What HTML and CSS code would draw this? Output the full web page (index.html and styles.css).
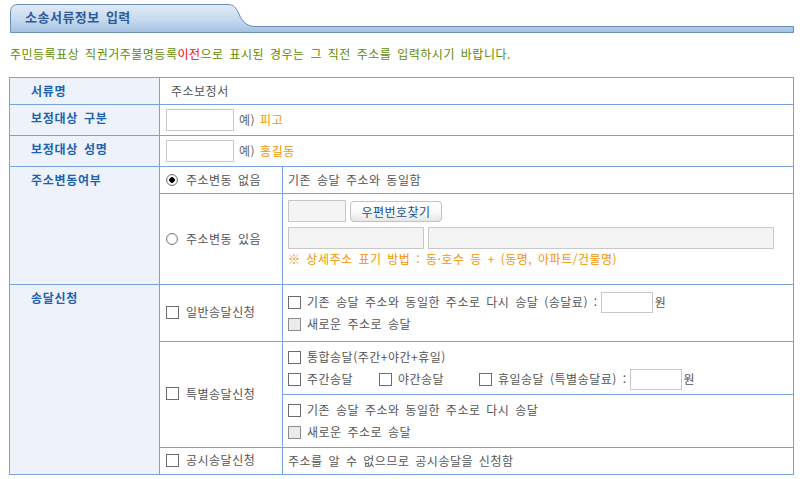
FILE: index.html
```html
<!DOCTYPE html>
<html lang="ko">
<head>
    <meta charset="UTF-8">
    <title>소송서류정보 입력</title>
    <link rel="stylesheet" href="styles.css">
</head>
<body>
    <div class="page">

        <div class="title">
            <svg class="title-bg" viewBox="0 0 784 29" preserveAspectRatio="none">
                <defs>
                    <linearGradient id="tabFill" x1="0" y1="0" x2="0" y2="1">
                        <stop offset="0" stop-color="#e1ebf6"/>
                        <stop offset="0.55" stop-color="#c6d9ee"/>
                        <stop offset="1" stop-color="#a3c0e0"/>
                    </linearGradient>
                </defs>
                <path d="M0.5,28.5 L0.5,8 Q0.5,0.5 8,0.5 L218,0.5 C224,0.5 226,4 229,10 C232,17 236,22.5 246,22.5 L783.5,22.5 L783.5,28.5 Z"
                      fill="url(#tabFill)" stroke="#6a8fbd" stroke-width="1"/>
            </svg>
            <span class="title-text">소송서류정보 입력</span>
        </div>

        <p class="notice">주민등록표상 직권거주불명등록<em>이전</em>으로 표시된 경우는 그 직전 주소를 입력하시기 바랍니다.</p>

        <table class="form-table">
            <colgroup>
                <col class="c-label">
                <col class="c-opt">
                <col>
            </colgroup>
            <tr class="h27">
                <th>서류명</th>
                <td colspan="2"><span class="plain">주소보정서</span></td>
            </tr>
            <tr class="h31">
                <th>보정대상 구분</th>
                <td colspan="2">
                    <div class="line"><input type="text" class="txt w68"><span class="eg">예)</span><span class="eg-val">피고</span></div>
                </td>
            </tr>
            <tr class="h31">
                <th>보정대상 성명</th>
                <td colspan="2">
                    <div class="line"><input type="text" class="txt w68"><span class="eg">예)</span><span class="eg-val">홍길동</span></div>
                </td>
            </tr>
            <tr class="h27">
                <th rowspan="2">주소변동여부</th>
                <td class="opt"><label class="item"><input type="radio" name="addr" class="rad" checked>주소변동 없음</label></td>
                <td class="detail">기존 송달 주소와 동일함</td>
            </tr>
            <tr class="h91">
                <td class="opt"><label class="item"><input type="radio" name="addr" class="rad">주소변동 있음</label></td>
                <td class="detail top">
                    <div class="addr-line">
                        <input type="text" class="txt gray w58">
                        <button type="button" class="zip-btn">우편번호찾기</button>
                    </div>
                    <div class="addr-line gap">
                        <input type="text" class="txt gray w136">
                        <input type="text" class="txt gray w346">
                    </div>
                    <p class="addr-note">※ 상세주소 표기 방법 : 동·호수 등 + (동명, 아파트/건물명)</p>
                </td>
            </tr>
            <tr class="h57">
                <th rowspan="4">송달신청</th>
                <td class="opt"><label class="item"><input type="checkbox" class="chk">일반송달신청</label></td>
                <td class="detail">
                    <div class="line"><label class="item"><input type="checkbox" class="chk">기존 송달 주소와 동일한 주소로 다시 송달 (송달료) :</label><input type="text" class="txt fee">원</div>
                    <div class="line"><label class="item"><input type="checkbox" class="chk" disabled>새로운 주소로 송달</label></div>
                </td>
            </tr>
            <tr class="h53">
                <td class="opt" rowspan="2"><label class="item"><input type="checkbox" class="chk">특별송달신청</label></td>
                <td class="detail">
                    <div class="line"><label class="item"><input type="checkbox" class="chk">통합송달(주간+야간+휴일)</label></div>
                    <div class="line">
                        <label class="item w91"><input type="checkbox" class="chk">주간송달</label>
                        <label class="item w100"><input type="checkbox" class="chk">야간송달</label>
                        <label class="item"><input type="checkbox" class="chk">휴일송달 (특별송달료) :</label><input type="text" class="txt fee">원
                    </div>
                </td>
            </tr>
            <tr class="h53">
                <td class="detail">
                    <div class="line"><label class="item"><input type="checkbox" class="chk">기존 송달 주소와 동일한 주소로 다시 송달</label></div>
                    <div class="line"><label class="item"><input type="checkbox" class="chk" disabled>새로운 주소로 송달</label></div>
                </td>
            </tr>
            <tr class="h27">
                <td class="opt"><label class="item"><input type="checkbox" class="chk">공시송달신청</label></td>
                <td class="detail">주소를 알 수 없으므로 공시송달을 신청함</td>
            </tr>
        </table>

    </div>
</body>
</html>
```

FILE: styles.css
```css
body {
    margin: 0;
    background-color: #fff;
    font-family: "Noto Sans CJK KR", "Noto Sans", sans-serif;
    font-size: 12px;
    color: #555;
    letter-spacing: 0.5px;
    word-spacing: 2px;
}

.page {
    padding: 4px 0 0 9px;
    width: 785px;
}

/* title tab */
.title {
    position: relative;
    width: 784px;
    height: 29px;
    margin-left: 1px;
}

.title-bg {
    position: absolute;
    top: 0;
    left: 0;
    width: 784px;
    height: 29px;
}

.title-text {
    position: relative;
    display: block;
    padding-left: 15px;
    line-height: 26px;
    font-size: 13px;
    font-weight: 700;
    color: #2c5c9d;
}

.notice {
    margin: 13px 0 15px 1px;
    line-height: 16px;
    color: #5f8c00;
}

.notice em {
    font-style: normal;
    color: #f00;
}

/* form table */
.form-table {
    width: 785px;
    border-collapse: collapse;
    table-layout: fixed;
}

.c-label {
    width: 150px;
}

.c-opt {
    width: 123px;
}

.form-table th,
.form-table td {
    border: 1px solid #78a3de;
    padding: 0 0 0 6px;
    line-height: 16px;
}

.form-table th {
    background-color: #eef3fb;
    color: #1d62b2;
    font-weight: 700;
    text-align: left;
    vertical-align: top;
    padding: 5px 0 0 21px;
    letter-spacing: 0.7px;
}

.h27 { height: 27px; }
.h31 { height: 31px; }
.h53 { height: 53px; }
.h57 { height: 57px; }
.h91 { height: 91px; }

.plain {
    padding-left: 5px;
}

.form-table td.detail {
    padding: 3px 0 3px 5px;
}

.form-table td.top {
    vertical-align: top;
    padding-top: 6px;
}

.item {
    display: inline-flex;
    align-items: center;
}

.w91 { width: 91px; }
.w100 { width: 100px; }

.line {
    display: flex;
    align-items: center;
    height: 22px;
}

/* inputs */
.txt {
    box-sizing: border-box;
    height: 22px;
    margin: 0;
    padding: 0 3px;
    border: 1px solid #c8c8c8;
    background-color: #fff;
    vertical-align: middle;
    font-family: inherit;
}

.gray {
    background-color: #f4f4f4;
}

.w58 { width: 58px; }
.w68 { width: 68px; }
.w136 { width: 136px; }
.w346 { width: 346px; }

.fee {
    width: 52px;
    height: 21px;
    margin: 0 2px 0 3px;
}

.eg {
    margin: 0 5px 0 5px;
    color: #666;
}

.eg-val {
    color: #f39300;
}

.chk {
    appearance: none;
    box-sizing: border-box;
    width: 13px;
    height: 13px;
    margin: 0 7px 0 0;
    border: 1px solid #6c6c6c;
    background-color: #fff;
}

.detail .chk {
    margin-right: 6px;
}

.chk:disabled {
    background-color: #ebebeb;
    border-color: #8c8c8c;
}

.rad {
    appearance: none;
    box-sizing: border-box;
    width: 12px;
    height: 12px;
    margin: 0 8px 0 0;
    border: 1px solid #7a7a7a;
    border-radius: 50%;
    background: radial-gradient(circle, #fff 0 3px, #f0f0f0 5px);
}

.rad:checked {
    background: radial-gradient(circle, #000 0 2.5px, #fff 3px, #e6e6e6 5px);
}

/* address */
.addr-line {
    display: flex;
    align-items: center;
    gap: 4px;
}

.addr-line.gap {
    margin-top: 5px;
}

.zip-btn {
    box-sizing: border-box;
    width: 92px;
    height: 21px;
    padding: 0;
    border: 1px solid #c2c2c2;
    border-radius: 4px;
    background: linear-gradient(#fff, #fafafa 50%, #e6e6e6);
    font-family: inherit;
    font-size: 12px;
    letter-spacing: 0.5px;
    color: #1a4c92;
    cursor: pointer;
}

.addr-note {
    margin: 3px 0 0;
    line-height: 14px;
    color: #f39300;
}
```
